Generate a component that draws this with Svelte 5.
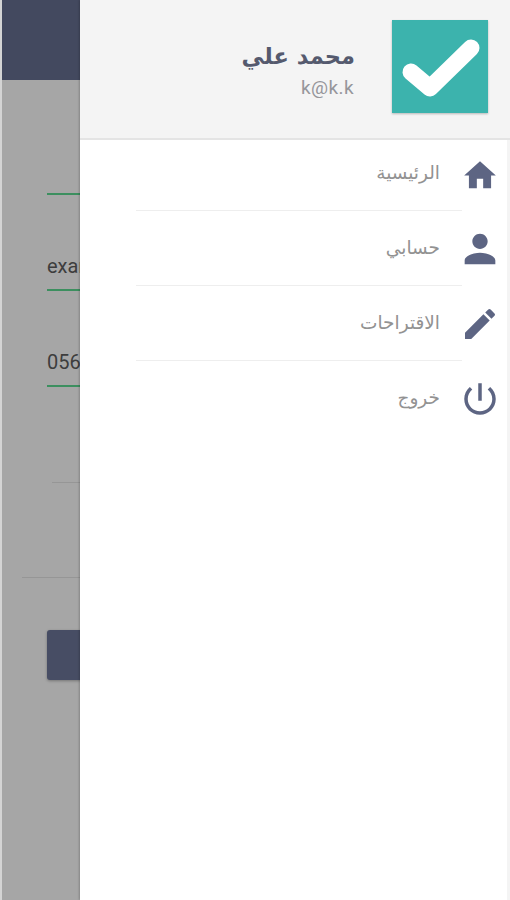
<script>
	const items = [
		{ label: 'الرئيسية', icon: 'home', size: 38 },
		{ label: 'حسابي', icon: 'person', size: 46 },
		{ label: 'الاقتراحات', icon: 'edit', size: 40 },
		{ label: 'خروج', icon: 'power', size: 42 }
	];
</script>

<div class="screen">
	<div class="page">
		<div class="topbar"></div>
		<div class="form">
			<div class="field first"></div>
			<div class="field second">example@mail.com</div>
			<div class="field third">0561234567</div>
			<div class="thin short"></div>
			<div class="thin long"></div>
			<div class="submit"></div>
		</div>
	</div>

	<aside class="drawer">
		<header class="profile">
			<div class="avatar">
				<svg viewBox="0 0 96 93" width="96" height="93">
					<path d="M19 52 L38 68 L79 28" fill="none" stroke="#fff" stroke-width="17" stroke-linecap="round" stroke-linejoin="round" />
				</svg>
			</div>
			<div class="who">
				<div class="name">محمد علي</div>
				<div class="mail">k@k.k</div>
			</div>
		</header>

		<nav class="menu">
			{#each items as item, i}
				<div class="row">
					<span class="icon">
						<svg viewBox={item.icon === 'home' ? '0 -1 24 24' : '0 0 24 24'} width={item.size} height={item.size}>
							{#if item.icon === 'home'}
								<path d="M10 20v-6h4v6h5v-8h3L12 3 2 12h3v8z" />
							{:else if item.icon === 'person'}
								<path d="M12 12c2.21 0 4-1.79 4-4s-1.79-4-4-4-4 1.79-4 4 1.79 4 4 4zm0 2c-2.67 0-8 1.34-8 4v2h16v-2c0-2.66-5.33-4-8-4z" />
							{:else if item.icon === 'edit'}
								<path d="M3 17.25V21h3.75L17.81 9.94l-3.75-3.75L3 17.25zM20.71 7.04a1 1 0 0 0 0-1.41l-2.34-2.34a1 1 0 0 0-1.41 0l-1.83 1.83 3.75 3.75 1.83-1.83z" />
							{:else}
								<path d="M13 3h-2v10h2V3zm4.83 2.17l-1.42 1.42C17.99 7.86 19 9.81 19 12c0 3.87-3.13 7-7 7s-7-3.13-7-7c0-2.19 1.01-4.14 2.58-5.42L6.17 5.17C4.23 6.82 3 9.26 3 12c0 4.97 4.03 9 9 9s9-4.03 9-9c0-2.74-1.23-5.18-3.17-6.83z" />
							{/if}
						</svg>
					</span>
					<span class="label" class:ruled={i < items.length - 1}>{item.label}</span>
				</div>
			{/each}
		</nav>
	</aside>
</div>

<style>
	:global(body) {
		margin: 0;
		background: #fff;
	}

	.screen {
		width: 510px;
		height: 900px;
		display: flex;
		overflow: hidden;
		font-family: "Roboto", "DejaVu Sans", sans-serif;
	}

	.page {
		width: 78px;
		margin-left: 2px;
		flex: none;
		background: #a6a6a6;
		overflow: hidden;
		box-shadow: -2px 0 0 #d4d4d4;
	}

	.topbar {
		height: 80px;
		background: #43495f;
	}

	.form {
		width: 400px;
		display: flex;
		flex-direction: column;
		padding-left: 45px;
	}

	.field {
		width: 300px;
		border-bottom: 2px solid #3c8f5f;
		box-sizing: border-box;
		font-size: 20px;
		line-height: 22px;
		color: #3d3d3d;
	}

	.first {
		height: 36px;
		margin-top: 79px;
	}

	.second {
		height: 36px;
		margin-top: 60px;
	}

	.third {
		height: 36px;
		margin-top: 60px;
	}

	.thin {
		height: 1px;
		background: #969696;
	}

	.short {
		margin: 95px 0 0 5px;
	}

	.long {
		margin: 94px 0 0 -25px;
	}

	.submit {
		width: 200px;
		height: 50px;
		margin-top: 52px;
		border-radius: 3px;
		background: #474d64;
		box-shadow: 0 1px 3px rgba(0, 0, 0, 0.3);
	}

	.drawer {
		flex: 1;
		min-width: 0;
		background: #fff;
		margin-right: 3px;
		box-shadow: 3px 0 0 #f4f4f4, -1px 0 2px rgba(0, 0, 0, 0.2);
		display: flex;
		flex-direction: column;
	}

	.profile {
		height: 140px;
		flex: none;
		box-sizing: border-box;
		background: #f4f4f4;
		border-bottom: 2px solid #e4e4e4;
		display: flex;
		flex-direction: row-reverse;
		align-items: flex-start;
		padding: 20px 22px 0 0;
		margin-right: -3px;
	}

	.avatar {
		width: 96px;
		height: 93px;
		background: #3cb3ad;
		box-shadow: 0 1px 2px rgba(0, 0, 0, 0.25);
	}

	.avatar svg {
		display: block;
	}

	.who {
		margin: 20px 37px 0 0;
		text-align: right;
	}

	.name {
		direction: rtl;
		font-family: "DejaVu Sans", sans-serif;
		font-size: 22.5px;
		font-weight: 700;
		line-height: 32px;
		color: #555a6e;
	}

	.mail {
		margin-top: 3px;
		padding-right: 1px;
		font-size: 19px;
		line-height: 26px;
		letter-spacing: 0.4px;
		color: #96969b;
	}

	.menu {
		display: flex;
		flex-direction: column;
		margin-top: -2px;
	}

	.row {
		height: 75px;
		display: flex;
		flex-direction: row-reverse;
		align-items: flex-start;
	}

	.icon {
		width: 54px;
		height: 71px;
		margin-left: -9px;
		flex: none;
		display: flex;
		justify-content: center;
		align-items: center;
		fill: #5d6583;
	}

	.icon svg {
		display: block;
	}

	.label {
		direction: rtl;
		flex: 1;
		height: 73px;
		margin-left: 56px;
		box-sizing: border-box;
		padding-right: 22px;
		padding-top: 23px;
		font-family: "DejaVu Sans", sans-serif;
		font-size: 18.5px;
		line-height: 24px;
		color: #929292;
	}

	.ruled {
		border-bottom: 1px solid #eeeeee;
	}
</style>
